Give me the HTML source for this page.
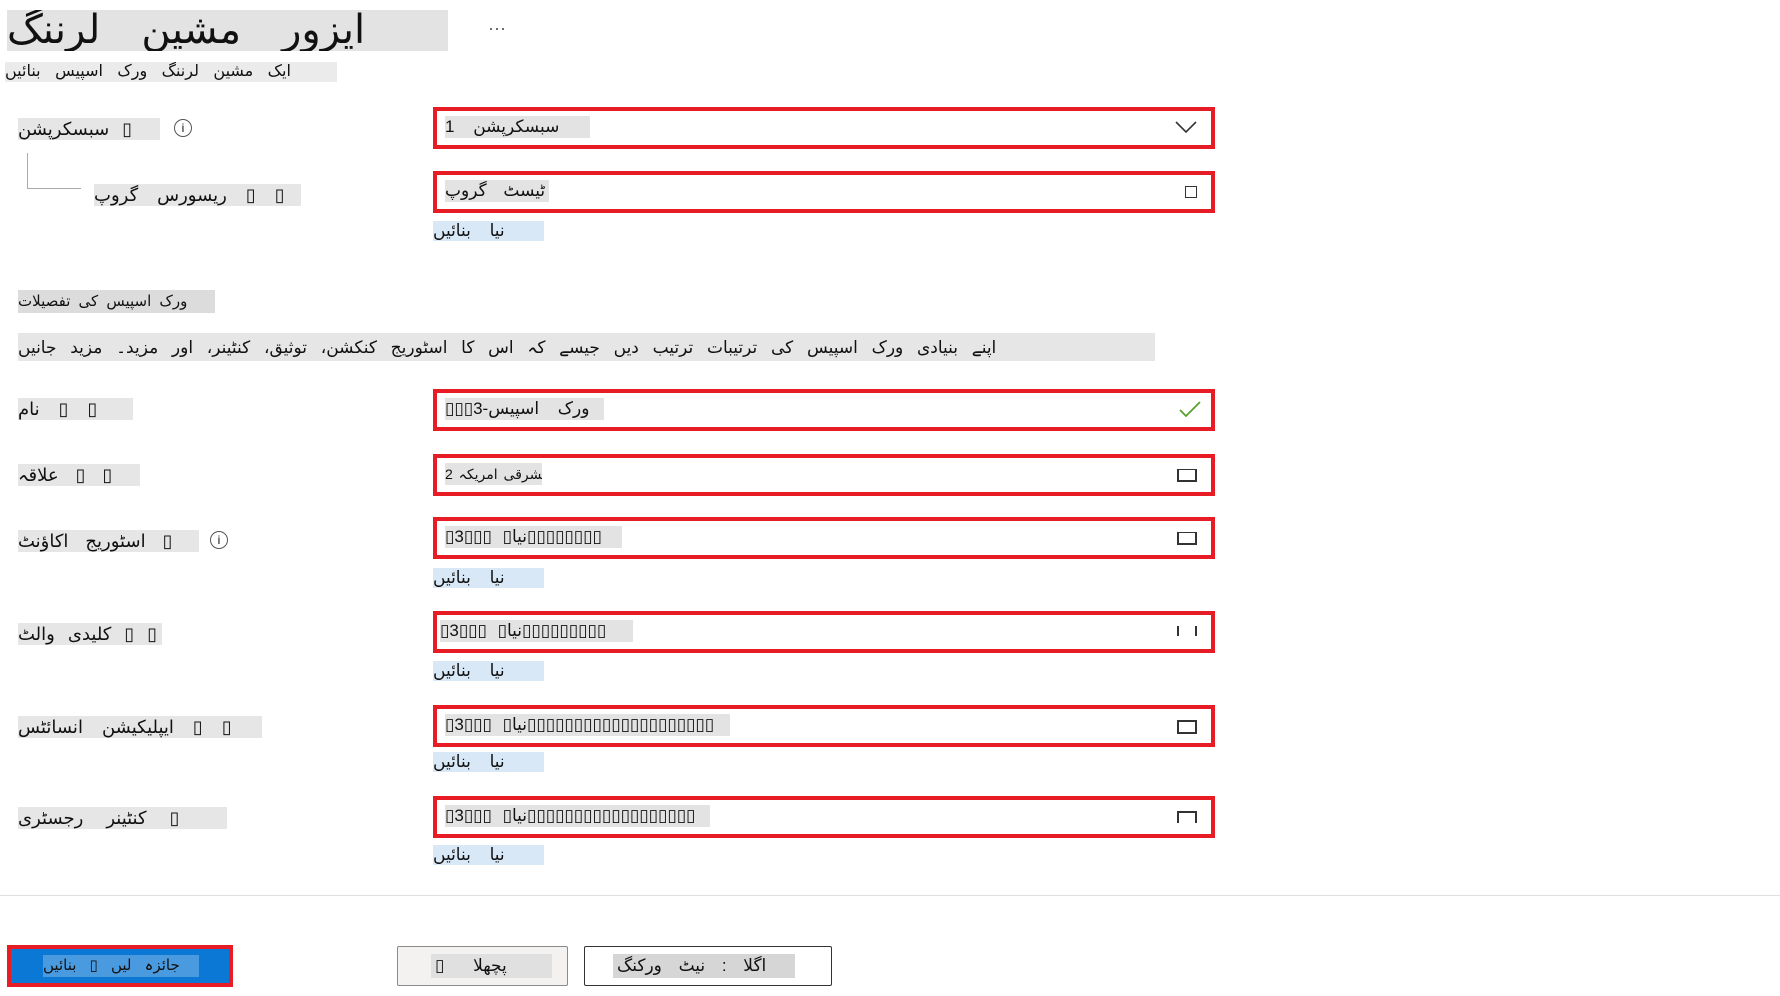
<!DOCTYPE html>
<html><head><meta charset="utf-8"><style>
body{margin:0;width:1780px;height:996px;background:#fff;font-family:"Liberation Sans","DejaVu Sans",sans-serif;color:#111;position:relative;overflow:hidden}
.a{position:absolute;white-space:nowrap;overflow:hidden}
.g{background:#e3e3e3}
.lbl{font-size:18px;background:#e6e6e6;height:22px;line-height:22px;word-spacing:8px;text-align:left;direction:ltr}
.box{position:absolute;left:433px;width:774px;height:34px;border:4px solid #e81c24;background:#fff}
.box .t{position:absolute;left:8px;top:5px;font-size:17px;background:#e3e3e3;height:22px;line-height:22px;overflow:hidden;white-space:nowrap;word-spacing:6px}
.box .ic{position:absolute;right:14px;top:11px;width:16px;height:10px;border:2px solid #333;border-top-width:1px}
.lnk{position:absolute;left:433px;width:111px;height:20px;line-height:20px;font-size:17px;background:#d8e8f7;color:#111;word-spacing:14px;overflow:hidden;white-space:nowrap}
.ii{position:absolute;width:16px;height:16px;border:1px solid #555;border-radius:50%;font-size:12px;text-align:center;line-height:16px}
</style></head><body>
<div class="a g" style="left:7px;top:10px;width:441px;height:41px;font-size:40px;line-height:41px;word-spacing:30px">ایزور مشین لرننگ</div>
<div class="a" style="left:488px;top:18px;font-size:18px;color:#555">···</div>
<div class="a" style="left:5px;top:62px;width:332px;height:20px;background:#ebebeb;font-size:16px;line-height:20px;word-spacing:10px">ایک مشین لرننگ ورک اسپیس بنائیں</div>

<div class="a lbl" style="left:18px;top:118px;width:142px">سبسکرپشن ▯</div>
<div class="ii" style="left:174px;top:119px">i</div>
<div class="a" style="left:27px;top:153px;width:1px;height:36px;background:#aaa"></div>
<div class="a" style="left:27px;top:188px;width:54px;height:1px;background:#aaa"></div>
<div class="a lbl" style="left:94px;top:184px;width:207px;word-spacing:14px">ریسورس گروپ ▯ ▯</div>
<div class="box" style="top:107px"><span class="t" style="width:145px;word-spacing:14px">سبسکرپشن 1</span><svg class="a" style="right:14px;top:9px" width="22" height="14"><path d="M1 2 L11 12 L21 2" stroke="#333" stroke-width="1.6" fill="none"/></svg></div>
<div class="box" style="top:171px"><span class="t" style="width:104px;word-spacing:12px">ٹیسٹ گروپ</span><span class="ic" style="width:10px;height:10px;border-width:1px"></span></div>
<div class="lnk" style="top:221px">نیا بنائیں</div>

<div class="a" style="left:18px;top:290px;width:197px;height:23px;background:#dcdcdc;font-size:15px;line-height:23px;word-spacing:4px">ورک اسپیس کی تفصیلات</div>
<div class="a" style="left:18px;top:333px;width:1137px;height:28px;background:#e6e6e6;font-size:17px;line-height:30px;word-spacing:9px">اپنے بنیادی ورک اسپیس کی ترتیبات ترتیب دیں جیسے کہ اس کا اسٹوریج کنکشن، توثیق، کنٹینر، اور مزید۔ مزید جانیں</div>

<div class="a lbl" style="left:18px;top:398px;width:115px;word-spacing:14px">نام ▯ ▯</div>
<div class="a lbl" style="left:18px;top:464px;width:122px;word-spacing:12px">علاقہ ▯ ▯</div>
<div class="a lbl" style="left:18px;top:530px;width:181px;word-spacing:12px">اسٹوریج اکاؤنٹ ▯</div>
<div class="ii" style="left:210px;top:531px">i</div>
<div class="a lbl" style="left:18px;top:623px;width:144px">کلیدی والٹ ▯ ▯</div>
<div class="a lbl" style="left:18px;top:716px;width:244px;word-spacing:14px">ایپلیکیشن انسائٹس ▯ ▯</div>
<div class="a lbl" style="left:18px;top:807px;width:209px;word-spacing:18px">کنٹینر رجسٹری ▯</div>

<div class="box" style="top:389px"><span class="t" style="width:159px;word-spacing:14px">▯▯▯3-ورک اسپیس</span><svg class="a" style="right:10px;top:7px" width="22" height="18"><path d="M1 10 L7 16 L21 2" stroke="#5aa02c" stroke-width="1.8" fill="none"/></svg></div>
<div class="box" style="top:454px"><span class="t" style="font-size:14px;width:97px;word-spacing:2px">مشرقی امریکہ 2</span><span class="ic"></span></div>
<div class="box" style="top:517px"><span class="t" style="width:177px">▯نیا▯ ▯▯▯3▯▯▯▯▯▯▯▯</span><span class="ic"></span></div>
<div class="lnk" style="top:568px">نیا بنائیں</div>
<div class="box" style="top:611px"><span class="t" style="left:3px;width:193px">▯نیا▯ ▯▯▯3▯▯▯▯▯▯▯▯▯</span><span class="ic" style="border-top:none;border-bottom:none"></span></div>
<div class="lnk" style="top:661px">نیا بنائیں</div>
<div class="box" style="top:705px"><span class="t" style="width:285px">▯نیا▯ ▯▯▯3▯▯▯▯▯▯▯▯▯▯▯▯▯▯▯▯▯▯▯▯</span><span class="ic" style="border-width:2px"></span></div>
<div class="lnk" style="top:752px">نیا بنائیں</div>
<div class="box" style="top:796px"><span class="t" style="width:265px">▯نیا▯ ▯▯▯3▯▯▯▯▯▯▯▯▯▯▯▯▯▯▯▯▯▯</span><span class="ic" style="border-bottom:none;border-width:2px"></span></div>
<div class="lnk" style="top:845px">نیا بنائیں</div>

<div class="a" style="left:0;top:895px;width:1780px;height:1px;background:#e0e0e0"></div>
<div class="a" style="left:7px;top:945px;width:218px;height:34px;border:4px solid #e81c24;background:#0a78d4"></div>
<div class="a" style="left:43px;top:955px;width:156px;height:22px;background:#4a9ae0;font-size:15px;line-height:22px;word-spacing:9px">جائزہ لیں ▯ بنائیں</div>
<div class="a" style="left:397px;top:946px;width:169px;height:38px;border:1px solid #8a8a8a;border-radius:2px;background:#f3f2f1"></div>
<div class="a" style="left:431px;top:954px;width:121px;height:24px;line-height:24px;background:#e0e0e0;font-size:17px;word-spacing:24px;padding-left:4px;box-sizing:border-box">▯ پچھلا</div>
<div class="a" style="left:584px;top:946px;width:246px;height:38px;border:1px solid #333;border-radius:2px;background:#fff"></div>
<div class="a" style="left:613px;top:954px;width:182px;height:24px;line-height:24px;background:#d6d6d6;font-size:17px;word-spacing:12px;padding-left:4px;box-sizing:border-box">اگلا : نیٹ ورکنگ</div>
</body></html>
